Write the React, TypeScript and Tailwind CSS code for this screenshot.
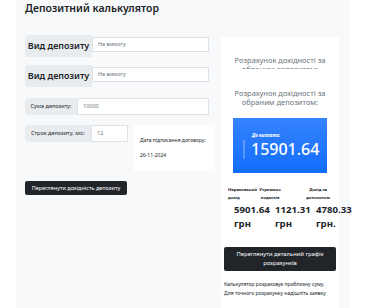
const font = { fontFamily: '"Noto Sans", "Open Sans", sans-serif' };

function InputGroup({ label, value, labelW, inputW, big }: { label: string; value: string; labelW: string; inputW: string; big?: boolean }) {
  return (
    <div className="flex items-start">
      <div
        className={`${labelW} ${big ? "h-[22px] text-[9px] font-semibold" : "h-[17px] text-[5.5px]"} flex shrink-0 items-center justify-center rounded-l-[3px] bg-[#e9ecef] text-[#212529]`}
      >
        {label}
      </div>
      <div
        className={`${inputW} ${big ? "mt-[2px] h-[15px]" : "h-[17px]"} flex items-center border border-[#dee2e6] bg-white pl-[5px] text-[5.5px] text-[#6c757d]`}
      >
        {value}
      </div>
    </div>
  );
}

const results = [
  { label: "Нарахований дохід", amount: "5901.64", unit: "грн", labelCls: "w-[28px] text-left" },
  { label: "Утримано податків", amount: "1121.31", unit: "грн", labelCls: "ml-[1px] w-[28px] text-center" },
  { label: "Дохід за депозитом", amount: "4780.33", unit: "грн.", labelCls: "ml-[17px] w-[38px] text-center" },
];

export default function App() {
  return (
    <div className="h-[308px] w-[369px] overflow-hidden bg-white" style={font}>
      <div className="ml-4 h-[308px] w-[334px] bg-[#f8f9fa] pl-[9px]">
        <h1 className="pt-[1px] text-[10.5px] font-semibold leading-[14px] text-[#212529]">Депозитний калькулятор</h1>

        <div className="mt-[20px] flex gap-[6px]">
          {/* left column */}
          <div className="flex w-[190px] flex-col">
            <InputGroup label="Вид депозиту" value="На вимогу" labelW="w-[67px]" inputW="w-[117px]" big />
            <div className="mt-[8px]">
              <InputGroup label="Вид депозиту" value="На вимогу" labelW="w-[67px]" inputW="w-[117px]" big />
            </div>
            <div className="mt-[11px]">
              <InputGroup label="Сума депозиту:" value="10000" labelW="w-[52px]" inputW="w-[132px]" />
            </div>
            <div className="mt-[10px] flex items-start gap-[6px]">
              <InputGroup label="Строк депозиту, міс:" value="12" labelW="w-[66px]" inputW="w-[37px]" />
              <div className="flex h-[46px] w-[83px] flex-col justify-center gap-[7px] bg-white pl-[6px] text-[5px] text-[#212529]">
                <span>Дата підписання договору:</span>
                <span>26-11-2024</span>
              </div>
            </div>
            <button className="mt-[10px] h-[14px] w-[102px] rounded-[2px] bg-[#212529] text-[5.5px] text-white">
              Переглянути дохідність депозиту
            </button>
          </div>

          {/* right card */}
          <div className="mt-[2px] flex h-[280px] w-[118px] flex-col rounded-[3px] bg-white px-[3px]">
            <div className="mx-[9px] mt-[19px] h-[13px] overflow-hidden text-center text-[7.5px] leading-[9px] text-[#6c757d]">
              Розрахунок дохідності за обраним депозитом:
            </div>
            <div className="mx-[9px] mt-[20px] text-center text-[7.5px] leading-[9px] text-[#6c757d]">
              Розрахунок дохідності за обраним депозитом:
            </div>
            <div className="mx-[9px] mt-[11px] flex h-[55px] flex-col justify-center bg-gradient-to-b from-[#3583fd] to-[#0f6cfd] pl-[10px]">
              <div className="ml-[9px] text-[4.5px] font-bold italic text-white">До виплати:</div>
              <div className="mt-[2px] border-l-2 border-[rgba(255,255,255,0.25)] pl-[6px] text-[16px] font-medium leading-[19px] text-white">
                15901.64
              </div>
            </div>
            <div className="ml-[4px] mt-[13px] flex text-[#212529]">
              {results.map((r) => (
                <div key={r.label} className={`${r.labelCls} text-[4.2px] font-bold leading-[8px]`}>
                  {r.label}
                </div>
              ))}
            </div>
            <div className="ml-[10px] mt-[1px] flex text-[#212529]">
              {results.map((r) => (
                <div key={r.amount} className="w-[41px] shrink-0 text-[9.6px] font-bold leading-[14px]">
                  {r.amount}
                  <br />
                  {r.unit}
                </div>
              ))}
            </div>
            <button className="mt-[16px] h-[24px] w-full rounded-[2px] bg-[#212529] px-[6px] text-[5.8px] leading-[9px] text-white">
              Переглянути детальний графік розрахунків
            </button>
            <p className="mt-[9px] whitespace-nowrap text-[5px] leading-[9px] text-[#212529]">
              Калькулятор розраховує приблизну суму.
              <br />
              Для точного розрахунку надішліть заявку
            </p>
          </div>
        </div>
      </div>
    </div>
  );
}
